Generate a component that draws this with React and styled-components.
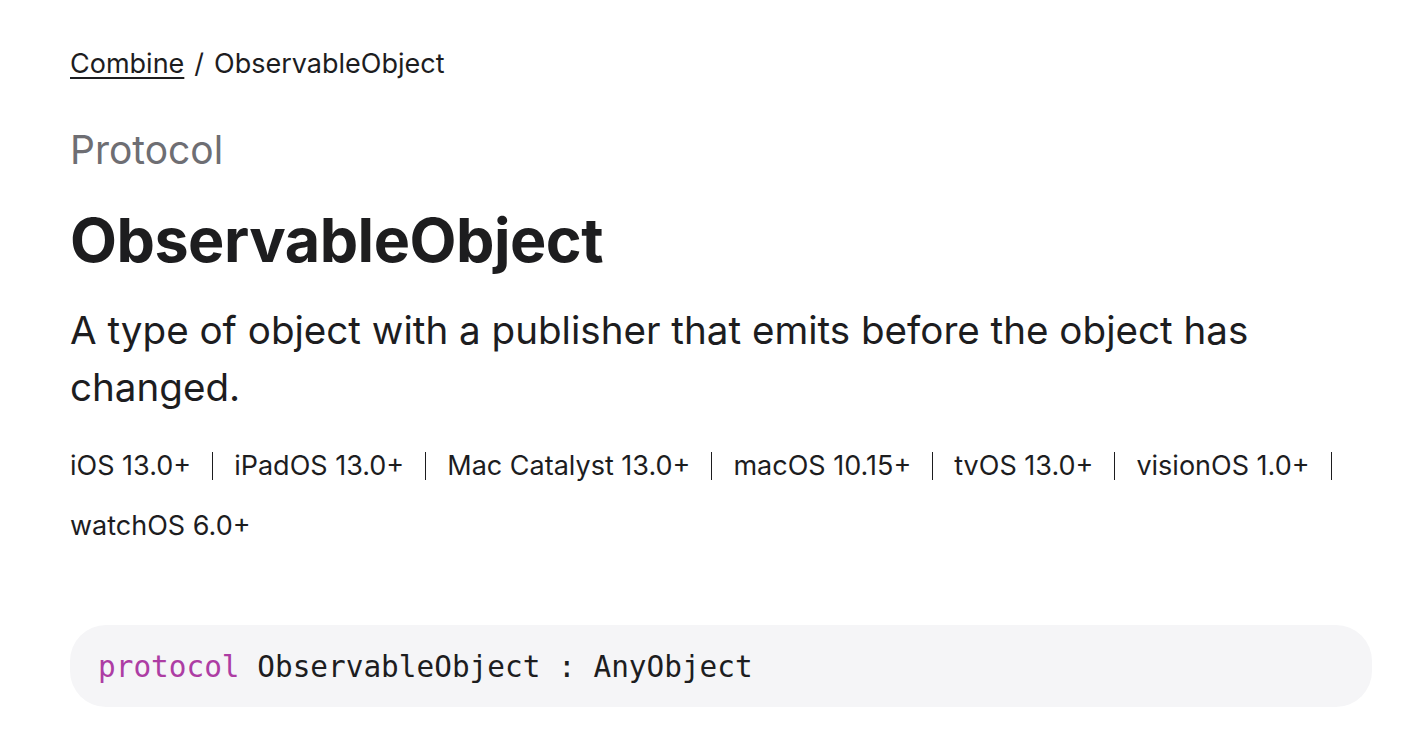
import styled, { createGlobalStyle } from "styled-components";

const GlobalStyle = createGlobalStyle`
  body {
    margin: 0;
    background: #fff;
    font-family: Inter, "Noto Sans", sans-serif;
    color: #1d1d1f;
  }
`;

const Page = styled.main`
  padding: 44px 52px 0 70px;
`;

const Breadcrumbs = styled.nav`
  display: flex;
  align-items: center;
  gap: 10px;
  font-size: 27px;
  line-height: 40px;
  a {
    color: #1d1d1f;
    text-decoration: underline;
    text-underline-offset: 4px;
    text-decoration-thickness: 1.5px;
  }
`;

const Eyebrow = styled.div`
  margin-top: 42px;
  font-size: 39px;
  line-height: 48px;
  color: #6e6e73;
`;

const Title = styled.h1`
  margin: 30px 0 0;
  font-size: 61px;
  line-height: 72px;
  font-weight: 700;
  letter-spacing: -0.5px;
`;

const Abstract = styled.p`
  margin: 26px 0 0;
  font-size: 38.6px;
  line-height: 57px;
  max-width: 1260px;
`;

const Platforms = styled.ul`
  list-style: none;
  margin: 34px 0 0;
  padding: 0;
  display: flex;
  flex-wrap: wrap;
  row-gap: 28px;
  font-size: 27px;
  line-height: 32px;
`;

const Platform = styled.li`
  padding-right: 21px;
  margin-right: 21px;
  border-right: 1.5px solid #1d1d1f;
  line-height: 28px;
  margin-top: 2px;
  margin-bottom: 2px;
  &:last-child {
    border-right: none;
  }
`;

const Declaration = styled.pre`
  margin: 83px 0 0;
  padding: 2px 28px 0;
  height: 82px;
  box-sizing: border-box;
  display: flex;
  align-items: center;
  background: #f5f5f7;
  border-radius: 36px;
  font-family: "DejaVu Sans Mono", "Liberation Mono", monospace;
  font-size: 29.4px;
  color: #1d1d1f;
`;

const Keyword = styled.span`
  color: #ad3da4;
`;

const platforms = [
  "iOS 13.0+",
  "iPadOS 13.0+",
  "Mac Catalyst 13.0+",
  "macOS 10.15+",
  "tvOS 13.0+",
  "visionOS 1.0+",
  "watchOS 6.0+",
];

export default function App() {
  return (
    <>
      <GlobalStyle />
      <Page>
        <Breadcrumbs>
          <a href="#">Combine</a>
          <span>/</span>
          <span>ObservableObject</span>
        </Breadcrumbs>
        <Eyebrow>Protocol</Eyebrow>
        <Title>ObservableObject</Title>
        <Abstract>
          A type of object with a publisher that emits before the object has
          changed.
        </Abstract>
        <Platforms>
          {platforms.map((p) => (
            <Platform key={p}>{p}</Platform>
          ))}
        </Platforms>
        <Declaration>
          <Keyword>protocol</Keyword> ObservableObject : AnyObject
        </Declaration>
      </Page>
    </>
  );
}
